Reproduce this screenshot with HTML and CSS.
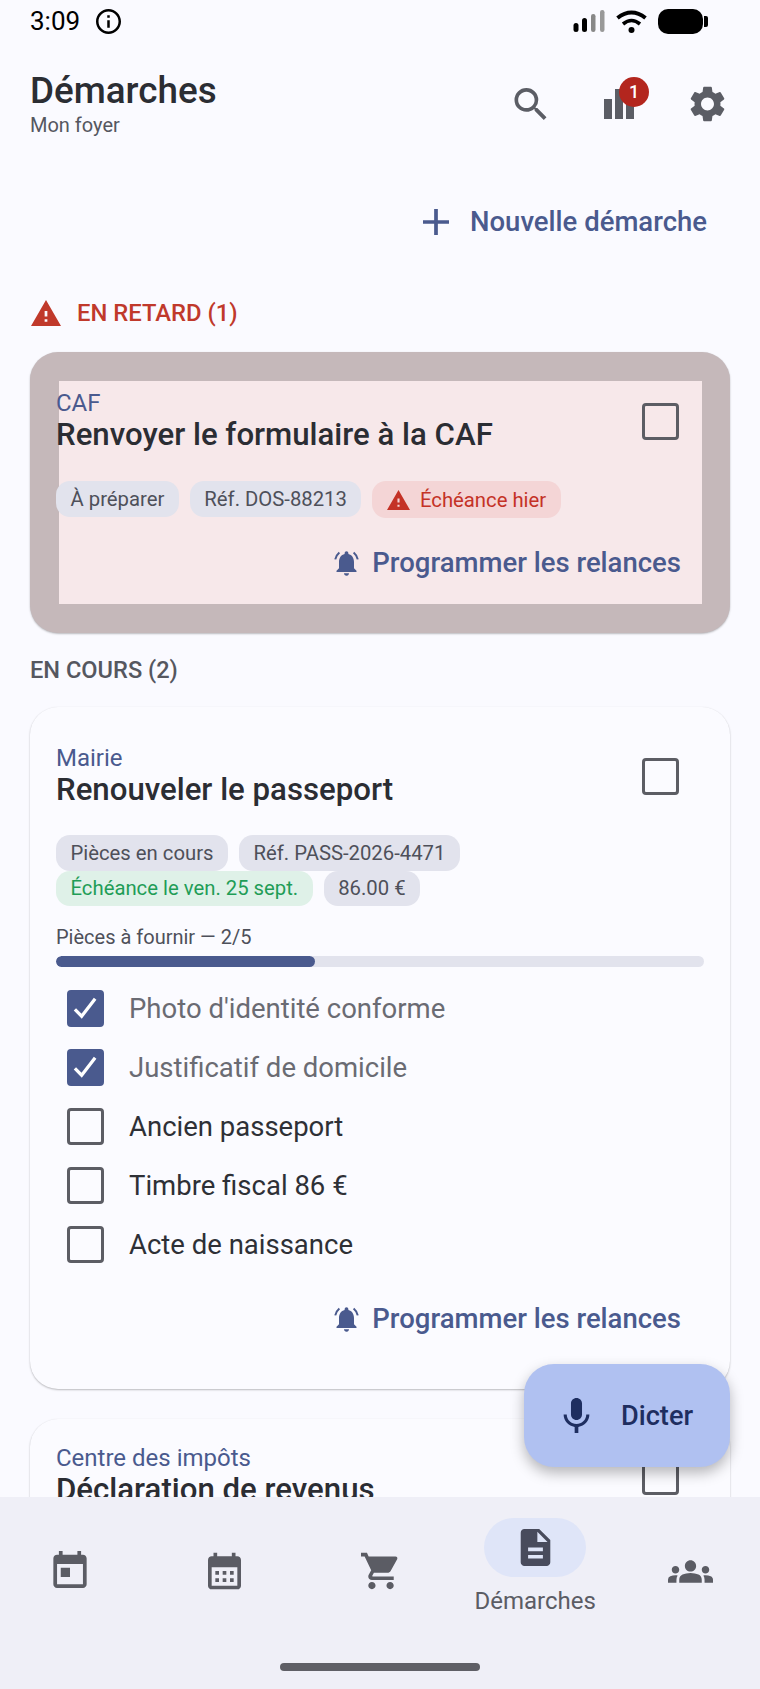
FILE: index.html
```html
<!DOCTYPE html>
<html lang="fr">

<head>
  <meta charset="UTF-8" />
  <meta name="viewport" content="width=device-width, initial-scale=1.0" />
  <title>Démarches</title>
  <link rel="stylesheet" href="styles.css">
</head>

<body>
  <div class="screen">
    <!-- STATUS BAR -->
    <div class="status-bar">
      <span class="status-time">3:09</span>
      <svg class="status-info" viewBox="2 2 20 20"><path d="M11 7h2v2h-2zm0 4h2v6h-2zm1-9C6.48 2 2 6.48 2 12s4.48 10 10 10 10-4.48 10-10S17.52 2 12 2zm0 18c-4.41 0-8-3.59-8-8s3.59-8 8-8 8 3.59 8 8-3.59 8-8 8z" /></svg>
      <div class="status-right">
        <svg class="status-signal" viewBox="0 0 32 22">
          <rect x="0.5" y="13" width="5" height="9" rx="2.5" fill="#000" />
          <rect x="9" y="8" width="5" height="14" rx="2.5" fill="#000" />
          <rect x="18" y="4" width="4.5" height="18" rx="2.2" fill="#888" />
          <rect x="27" y="0" width="4.5" height="22" rx="2.2" fill="#999" />
        </svg>
        <svg class="status-wifi" viewBox="0 0 31 23">
          <path d="M1.5 8Q15.5 -3 29.5 8" fill="none" stroke="#000" stroke-width="4" />
          <path d="M7 14Q15.5 7 24 14" fill="none" stroke="#000" stroke-width="3.6" />
          <circle cx="15.5" cy="20" r="3" fill="#000" />
        </svg>
        <div class="status-battery"></div>
        <div class="status-nub"></div>
      </div>
    </div>

    <div class="content">
      <!-- HEADER -->
      <header class="top-bar">
        <div>
          <h1>Démarches</h1>
          <p class="subtitle">Mon foyer</p>
        </div>
        <div class="top-actions">
          <button class="icon-btn">
            <svg class="icon-search" viewBox="3 3 17.5 17.5"><path d="M15.5 14h-.79l-.28-.27A6.471 6.471 0 0 0 16 9.5 6.5 6.5 0 1 0 9.5 16c1.61 0 3.09-.59 4.23-1.57l.27.28v.79l5 4.99L20.49 19l-4.99-5zm-6 0C7.01 14 5 11.99 5 9.5S7.01 5 9.5 5 14 7.01 14 9.5 11.99 14 9.5 14z" /></svg>
          </button>
          <button class="icon-btn">
            <svg class="icon-chart" viewBox="0 0 30 30">
              <rect x="0" y="10" width="8" height="20" />
              <rect x="11" y="0" width="8" height="30" />
              <rect x="22" y="14" width="8" height="16" />
            </svg>
            <span class="badge">1</span>
          </button>
          <button class="icon-btn">
            <svg class="icon-gear" viewBox="2.5 2 19 20"><path d="M19.14 12.94c.04-.3.06-.61.06-.94 0-.32-.02-.64-.07-.94l2.03-1.58a.49.49 0 0 0 .12-.61l-1.92-3.32a.488.488 0 0 0-.59-.22l-2.39.96c-.5-.38-1.03-.7-1.62-.94l-.36-2.54a.484.484 0 0 0-.48-.41h-3.84c-.24 0-.43.17-.47.41l-.36 2.54c-.59.24-1.13.57-1.62.94l-2.39-.96c-.22-.08-.47 0-.59.22L2.74 8.87c-.12.21-.08.47.12.61l2.03 1.58c-.05.3-.09.63-.09.94s.02.64.07.94l-2.03 1.58a.49.49 0 0 0-.12.61l1.92 3.32c.12.22.37.29.59.22l2.39-.96c.5.38 1.03.7 1.62.94l.36 2.54c.05.24.24.41.48.41h3.84c.24 0 .44-.17.47-.41l.36-2.54c.59-.24 1.13-.56 1.62-.94l2.39.96c.22.08.47 0 .59-.22l1.92-3.32c.12-.22.07-.47-.12-.61l-2.01-1.58zM12 15.6c-1.98 0-3.6-1.62-3.6-3.6s1.62-3.6 3.6-3.6 3.6 1.62 3.6 3.6-1.62 3.6-3.6 3.6z" /></svg>
          </button>
        </div>
      </header>

      <div class="new-row">
        <button class="new-btn">
          <svg class="icon-add" viewBox="5 5 14 14"><path d="M19 13h-6v6h-2v-6H5v-2h6V5h2v6h6v2z" /></svg>
          Nouvelle démarche
        </button>
      </div>

      <!-- EN RETARD -->
      <h2 class="section-late">
        <svg class="icon-warning" viewBox="1 2 22 19"><path d="M1 21h22L12 2 1 21zm12-3h-2v-2h2v2zm0-4h-2v-4h2v4z" /></svg>
        EN RETARD (1)
      </h2>

      <div class="card card-late">
        <div class="card-head">
          <div>
            <div class="card-org">CAF</div>
            <div class="card-title">Renvoyer le formulaire à la CAF</div>
          </div>
          <span class="checkbox card-check"></span>
        </div>
        <div class="chips">
          <span class="chip">À préparer</span>
          <span class="chip">Réf. DOS-88213</span>
          <span class="chip chip-red">
            <svg class="icon-warning-small" viewBox="1 2 22 19"><path d="M1 21h22L12 2 1 21zm12-3h-2v-2h2v2zm0-4h-2v-4h2v4z" /></svg>
            Échéance hier
          </span>
        </div>
        <div class="remind-row">
          <button class="remind-btn">
            <svg class="icon-bell" viewBox="2 2.5 20 19.5">
              <path d="M18 11c0-3.07-1.64-5.64-4.5-6.32V4c0-.83-.67-1.5-1.5-1.5s-1.5.67-1.5 1.5v.68C7.63 5.36 6 7.92 6 11v5l-2 2v1h16v-1l-2-2v-5zm-6 11c.14 0 .27-.01.4-.04.65-.14 1.18-.58 1.44-1.18.1-.24.15-.5.15-.78h-4c.01 1.1.9 2 2.01 2z" />
              <path class="bell-tick" d="M3 9Q3.6 5.8 6.3 3.5M21 9Q20.4 5.8 17.7 3.5" />
            </svg>
            Programmer les relances
          </button>
        </div>
      </div>

      <!-- EN COURS -->
      <h2 class="section-title">EN COURS (2)</h2>

      <div class="card">
        <div class="card-head">
          <div>
            <div class="card-org">Mairie</div>
            <div class="card-title">Renouveler le passeport</div>
          </div>
          <span class="checkbox card-check"></span>
        </div>
        <div class="chips">
          <span class="chip">Pièces en cours</span>
          <span class="chip">Réf. PASS-2026-4471</span>
          <span class="chip chip-green">Échéance le ven. 25 sept.</span>
          <span class="chip">86.00 €</span>
        </div>
        <div class="progress-label">Pièces à fournir — 2/5</div>
        <div class="progress">
          <div class="progress-fill" style="width: 40%"></div>
        </div>
        <ul class="checklist">
          <li class="done">
            <span class="checkbox checked"><svg viewBox="0 0 28 28"><path d="M3 15l7 7L24 4" /></svg></span>
            Photo d'identité conforme
          </li>
          <li class="done">
            <span class="checkbox checked"><svg viewBox="0 0 28 28"><path d="M3 15l7 7L24 4" /></svg></span>
            Justificatif de domicile
          </li>
          <li><span class="checkbox"></span>Ancien passeport</li>
          <li><span class="checkbox"></span>Timbre fiscal 86 €</li>
          <li><span class="checkbox"></span>Acte de naissance</li>
        </ul>
        <div class="remind-row">
          <button class="remind-btn">
            <svg class="icon-bell" viewBox="2 2.5 20 19.5">
              <path d="M18 11c0-3.07-1.64-5.64-4.5-6.32V4c0-.83-.67-1.5-1.5-1.5s-1.5.67-1.5 1.5v.68C7.63 5.36 6 7.92 6 11v5l-2 2v1h16v-1l-2-2v-5zm-6 11c.14 0 .27-.01.4-.04.65-.14 1.18-.58 1.44-1.18.1-.24.15-.5.15-.78h-4c.01 1.1.9 2 2.01 2z" />
              <path class="bell-tick" d="M3 9Q3.6 5.8 6.3 3.5M21 9Q20.4 5.8 17.7 3.5" />
            </svg>
            Programmer les relances
          </button>
        </div>
      </div>

      <div class="card card-next">
        <div class="card-head">
          <div>
            <div class="card-org">Centre des impôts</div>
            <div class="card-title">Déclaration de revenus</div>
          </div>
          <span class="checkbox card-check"></span>
        </div>
      </div>
    </div>

    <!-- BOTTOM NAV -->
    <nav class="bottom-nav">
      <div class="nav-items">
        <div class="nav-item">
          <svg class="icon-today" viewBox="3 1 18 20"><path d="M19 3h-1V1h-2v2H8V1H6v2H5c-1.11 0-1.99.9-1.99 2L3 19c0 1.1.89 2 2 2h14c1.1 0 2-.9 2-2V5c0-1.1-.9-2-2-2zm0 16H5V8h14v11zM7 10h5v5H7z" /></svg>
        </div>
        <div class="nav-item">
          <svg class="icon-month" viewBox="3 2 18 20"><path d="M19 4h-1V2h-2v2H8V2H6v2H5c-1.11 0-1.99.9-1.99 2L3 20c0 1.1.89 2 2 2h14c1.1 0 2-.9 2-2V6c0-1.1-.9-2-2-2zm0 16H5V10h14v10zM9 14H7v-2h2v2zm4 0h-2v-2h2v2zm4 0h-2v-2h2v2zm-8 4H7v-2h2v2zm4 0h-2v-2h2v2zm4 0h-2v-2h2v2z" /></svg>
        </div>
        <div class="nav-item">
          <svg class="icon-cart" viewBox="1 2 20.9 20"><path d="M7 18c-1.1 0-1.99.9-1.99 2S5.9 22 7 22s2-.9 2-2-.9-2-2-2zM1 2v2h2l3.6 7.59-1.35 2.45c-.16.28-.25.61-.25.96 0 1.1.9 2 2 2h12v-2H7.42c-.14 0-.25-.11-.25-.25l.03-.12.9-1.63h7.45c.75 0 1.41-.41 1.75-1.03l3.58-6.49A1.003 1.003 0 0 0 20 4H5.21l-.94-2H1zm16 16c-1.1 0-1.99.9-1.99 2s.89 2 1.99 2 2-.9 2-2-.9-2-2-2z" /></svg>
        </div>
        <div class="nav-item nav-item-active">
          <div class="nav-pill">
            <svg class="icon-doc" viewBox="4 2 16 20"><path d="M14 2H6c-1.1 0-1.99.9-1.99 2L4 20c0 1.1.89 2 2 2h12c1.1 0 2-.9 2-2V8l-6-6zm2 16H8v-2h8v2zm0-4H8v-2h8v2zm-3-5V3.5L18.5 9H13z" /></svg>
          </div>
          <span class="nav-label">Démarches</span>
        </div>
        <div class="nav-item">
          <svg class="icon-groups" viewBox="0 6 24 12"><path d="M4 13c1.1 0 2-.9 2-2s-.9-2-2-2-2 .9-2 2 .9 2 2 2zm1.13 1.1c-.37-.06-.74-.1-1.13-.1-.99 0-1.93.21-2.78.58A2.01 2.01 0 0 0 0 16.43V18h4.5v-1.61c0-.83.23-1.61.63-2.29zM20 13c1.1 0 2-.9 2-2s-.9-2-2-2-2 .9-2 2 .9 2 2 2zm4 3.43c0-.81-.48-1.53-1.22-1.85A6.95 6.95 0 0 0 20 14c-.39 0-.76.04-1.13.1.4.68.63 1.46.63 2.29V18H24v-1.57zm-7.76-2.78c-1.17-.52-2.61-.9-4.24-.9-1.63 0-3.07.39-4.24.9A2.988 2.988 0 0 0 6 16.39V18h12v-1.61c0-1.18-.68-2.26-1.76-2.74zM12 12c1.66 0 3-1.34 3-3s-1.34-3-3-3-3 1.34-3 3 1.34 3 3 3z" /></svg>
        </div>
      </div>
      <div class="home-bar"></div>
    </nav>

    <!-- FAB -->
    <button class="fab">
      <svg class="icon-mic" viewBox="5 2 14 19"><path d="M12 14c1.66 0 2.99-1.34 2.99-3L15 5c0-1.66-1.34-3-3-3S9 3.34 9 5v6c0 1.66 1.34 3 3 3zm5.3-3c0 3-2.54 5.1-5.3 5.1S6.7 14 6.7 11H5c0 3.41 2.72 6.23 6 6.72V21h2v-3.28c3.28-.48 6-3.3 6-6.72h-1.7z" /></svg>
      Dicter
    </button>
  </div>
</body>

</html>
```

FILE: styles.css
```css
* {
  box-sizing: border-box;
}

body {
  font-family: Roboto, sans-serif;
  margin: 0;
  background-color: #fafaff;
  color: #2b2d33;
}

button {
  font-family: inherit;
  border: none;
  background: none;
  padding: 0;
}

svg {
  display: block;
  fill: currentColor;
  flex-shrink: 0;
}

.screen {
  position: relative;
  width: 760px;
  height: 1689px;
  display: flex;
  flex-direction: column;
  overflow: hidden;
}

/* status bar */
.status-bar {
  height: 44px;
  flex-shrink: 0;
  display: flex;
  align-items: center;
  padding: 0 52px 2px 30px;
  color: #000;
}

.status-time {
  font-size: 26px;
  line-height: 32px;
  width: 66px;
}

.status-info {
  width: 25px;
  height: 25px;
}

.status-right {
  margin-left: auto;
  display: flex;
  align-items: center;
}

.status-signal {
  width: 32px;
  height: 22px;
  margin-right: 11px;
}

.status-wifi {
  width: 31px;
  height: 23px;
  margin-right: 11px;
}

.status-battery {
  width: 45px;
  height: 25px;
  background-color: #000;
  border-radius: 10px;
}

.status-nub {
  width: 4px;
  height: 11px;
  margin-left: 1px;
  background-color: #000;
  border-radius: 0 2px 2px 0;
}

/* content */
.content {
  flex: 1;
  min-height: 0;
  overflow: hidden;
  padding: 0 30px;
}

.top-bar {
  display: flex;
  justify-content: space-between;
  align-items: center;
  padding-top: 26px;
}

.top-bar h1 {
  margin: 0;
  font-size: 36.8px;
  line-height: 42px;
  font-weight: 500;
}

.subtitle {
  margin: 1px 0 0;
  font-size: 20px;
  line-height: 24px;
  color: #55575f;
}

.top-actions {
  display: flex;
  margin-right: -22px;
}

.icon-btn {
  position: relative;
  width: 89px;
  height: 48px;
  display: flex;
  align-items: center;
  justify-content: center;
  color: #5b5d65;
}

.icon-search {
  width: 33px;
  height: 32px;
  margin-left: 1px;
}

.icon-chart {
  width: 30px;
  height: 30px;
}

.icon-gear {
  width: 35px;
  height: 36px;
}

.badge {
  position: absolute;
  left: 45px;
  top: -3px;
  width: 30px;
  height: 30px;
  border-radius: 50%;
  background-color: #b3261e;
  color: #fff;
  font-size: 18px;
  font-weight: 500;
  line-height: 30px;
  text-align: center;
}

.new-row {
  display: flex;
  justify-content: flex-end;
  margin-top: 65px;
  padding-right: 23px;
}

.new-btn {
  display: flex;
  align-items: center;
  gap: 21px;
  font-size: 27.5px;
  line-height: 40px;
  font-weight: 500;
  color: #4a5a8e;
}

.icon-add {
  width: 26px;
  height: 26px;
}

.section-late {
  display: flex;
  align-items: center;
  gap: 16px;
  margin: 56px 0 24px 1px;
  font-size: 23.8px;
  line-height: 30px;
  font-weight: 500;
  color: #c0392b;
}

.icon-warning {
  width: 30px;
  height: 26px;
}

.section-title {
  margin: 23px 0 23px;
  font-size: 23.6px;
  line-height: 28px;
  font-weight: 500;
  color: #55575f;
}

/* cards */
.card {
  position: relative;
  background-color: #fbfbff;
  border-radius: 28px;
  padding: 37px 26px 50px;
  box-shadow: 0 1px 2px rgba(0, 0, 0, 0.25), 0 0 1px rgba(0, 0, 0, 0.06);
}

.card-late {
  background-color: #c5b8ba;
}

.card-late::before {
  content: "";
  position: absolute;
  inset: 29px 28.5px;
  background-color: #f7e8ea;
}

.card-late > * {
  position: relative;
}

.card-next {
  margin-top: 30px;
  padding-top: 25px;
}

.card-head {
  display: flex;
  justify-content: space-between;
  align-items: flex-start;
}

.card-org {
  font-size: 24px;
  line-height: 28px;
  color: #4a5a8e;
}

.card-title {
  font-size: 31.2px;
  line-height: 36px;
  font-weight: 500;
  color: #2b2d33;
}

.checkbox {
  display: block;
  flex-shrink: 0;
  width: 37px;
  height: 37px;
  border: 3.5px solid #5c5d64;
  border-radius: 4px;
}

.card-check {
  margin: 14px 25px 0 0;
}

.checkbox.checked {
  background-color: #4a5a8e;
  border-color: #4a5a8e;
  padding: 1.5px;
}

.checkbox.checked svg {
  width: 27px;
  height: 27px;
  fill: none;
  stroke: #fff;
  stroke-width: 3.4;
}

.chips {
  display: flex;
  flex-wrap: wrap;
  align-items: flex-start;
  column-gap: 11px;
  margin-top: 27px;
}

.card-late .chips {
  margin-top: 28px;
}

.chip {
  display: flex;
  align-items: center;
  gap: 10px;
  height: 35.5px;
  padding: 0 14.5px;
  border-radius: 14px;
  background-color: #e2e3ed;
  color: #4e505a;
  font-size: 20.3px;
}

.chip-red {
  height: 37px;
  background-color: #f4d5d6;
  color: #c43226;
}

.chip-green {
  background-color: #dff1e8;
  color: #1f9d57;
}

.icon-warning-small {
  width: 23px;
  height: 20px;
}

.remind-row {
  display: flex;
  justify-content: flex-end;
  margin-top: 25px;
  padding-right: 23px;
}

.remind-btn {
  display: flex;
  align-items: center;
  gap: 13px;
  font-size: 27.5px;
  line-height: 40px;
  font-weight: 500;
  color: #4a5a8e;
}

.icon-bell {
  width: 25px;
  height: 25px;
}

.bell-tick {
  fill: none;
  stroke: currentColor;
  stroke-width: 1.6;
}

.progress-label {
  margin-top: 18px;
  font-size: 20px;
  line-height: 26px;
  color: #4e505a;
}

.progress {
  height: 11px;
  margin-top: 6px;
  border-radius: 6px;
  background-color: #e2e3ed;
  overflow: hidden;
}

.progress-fill {
  height: 100%;
  border-radius: 6px;
  background-color: #4a5a8e;
}

.checklist {
  list-style: none;
  margin: 12px 0 0;
  padding: 0 0 0 11px;
}

.checklist li {
  display: flex;
  align-items: center;
  gap: 25px;
  height: 59px;
  font-size: 27.5px;
  color: #2e3036;
}

.checklist li.done {
  color: #6a6b73;
}

/* FAB */
.fab {
  position: absolute;
  right: 30px;
  bottom: 222px;
  width: 206px;
  height: 103px;
  display: flex;
  align-items: center;
  gap: 31px;
  padding-left: 39px;
  border-radius: 30px;
  background-color: #b0c1f1;
  color: #1e2e60;
  font-size: 27.2px;
  font-weight: 500;
  box-shadow: 0 6px 14px rgba(0, 0, 0, 0.28);
}

.icon-mic {
  width: 27px;
  height: 35px;
}

/* bottom nav */
.bottom-nav {
  position: relative;
  height: 192px;
  flex-shrink: 0;
  background-color: #efeff7;
}

.nav-items {
  display: flex;
  height: 166px;
  margin: 0 -8px;
}

.nav-item {
  flex: 1;
  display: flex;
  flex-direction: column;
  align-items: center;
  padding-top: 54px;
  color: #5b5c64;
}

.nav-item-active {
  padding-top: 21px;
}

.nav-pill {
  width: 102px;
  height: 59px;
  display: flex;
  align-items: center;
  justify-content: center;
  border-radius: 30px;
  background-color: #dfe5f8;
  color: #484b5c;
}

.nav-label {
  margin-top: 10px;
  font-size: 24px;
  line-height: 28px;
  color: #5b5c64;
}

.icon-today {
  width: 34px;
  height: 37px;
}

.icon-month {
  width: 33px;
  height: 38px;
  margin-top: 1px;
}

.icon-cart {
  width: 38px;
  height: 38px;
  margin-top: 1px;
}

.icon-doc {
  width: 31px;
  height: 37px;
}

.icon-groups {
  width: 45px;
  height: 23px;
  margin-top: 9px;
}

.home-bar {
  width: 200px;
  height: 8px;
  margin: 0 auto;
  border-radius: 4px;
  background-color: #5f5f66;
}
```
